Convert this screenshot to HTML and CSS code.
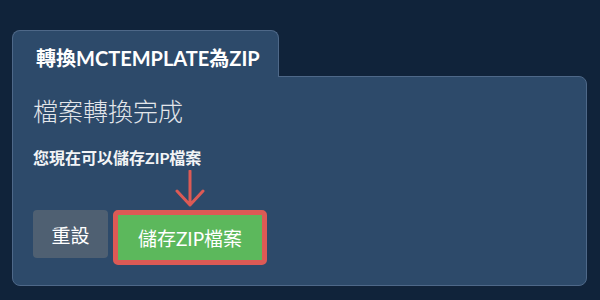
FILE: index.html
```html
<!DOCTYPE html>
<html lang="zh-Hant">
<head>
    <meta charset="UTF-8">
    <meta name="viewport" content="width=device-width, initial-scale=1.0">
    <title>轉換MCTEMPLATE為ZIP</title>
    <link rel="stylesheet" href="styles.css">
</head>
<body>

    <!-- Tab -->
    <div class="tab">轉換MCTEMPLATE為ZIP</div>

    <!-- Panel -->
    <div class="panel">
        <h2 class="status">檔案轉換完成</h2>
        <p class="hint">您現在可以儲存ZIP檔案</p>

        <div class="actions">
            <button class="btn btn-reset">重設</button>
            <div class="save-wrap">
                <svg class="arrow" width="30" height="38" viewBox="0 0 30 38">
                    <path d="M15 1 L15 35 M2 21 L15 35 L28 21" fill="none" stroke="#dc5a55" stroke-width="3" stroke-linecap="round" stroke-linejoin="round"/>
                </svg>
                <button class="btn btn-save">儲存ZIP檔案</button>
            </div>
        </div>
    </div>

</body>
</html>
```

FILE: styles.css
```css
* {
    margin: 0;
    padding: 0;
    box-sizing: border-box;
    font-family: Lato, "Noto Sans CJK TC", sans-serif;
}

body {
    background: #10233a;
    padding: 30px 13px 0 12px;
    width: 600px;
    height: 300px;
    overflow: hidden;
}

/* Tab */
.tab {
    display: inline-block;
    position: relative;
    z-index: 1;
    width: 267px;
    height: 47px;
    margin-bottom: -1px;
    padding: 14px 0 0 23px;
    background: #2d4a6a;
    border: 1px solid #4e6888;
    border-bottom: none;
    border-radius: 8px 8px 0 0;
    color: #fff;
    font-size: 20px;
    font-weight: bold;
    line-height: 26px;
    white-space: nowrap;
}

/* Panel */
.panel {
    background: #2d4a6a;
    border: 1px solid #4e6888;
    border-radius: 0 8px 8px 8px;
    padding: 20px;
}

.status {
    font-size: 25px;
    font-weight: 300;
    line-height: 29px;
    color: #e3e6ea;
}

.hint {
    margin-top: 21px;
    font-size: 16px;
    font-weight: bold;
    line-height: 22px;
    color: #f2f4f6;
}

/* Buttons */
.actions {
    display: flex;
    align-items: flex-start;
    gap: 5px;
    margin-top: 41px;
}

.btn {
    border: none;
    color: #fff;
    font-size: 19px;
    cursor: pointer;
}

.btn-reset {
    width: 75px;
    height: 48px;
    background: #4f6072;
    border-radius: 4px;
}

.save-wrap {
    position: relative;
}

.arrow {
    position: absolute;
    left: 62px;
    bottom: 100%;
    margin-bottom: 2px;
}

.btn-save {
    width: 154px;
    height: 55px;
    background: #5cb85c;
    border: 5px solid #dc5a55;
    border-radius: 5px;
}
```
